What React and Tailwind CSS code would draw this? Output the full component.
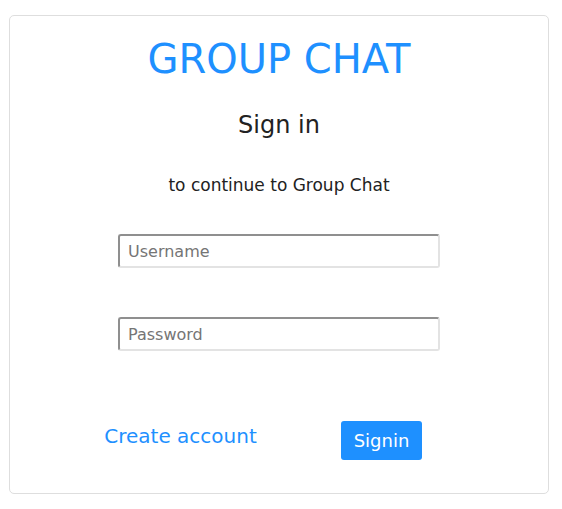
export default function App() {
  return (
    <div className="min-h-screen bg-white pt-[15px] pl-[9px] font-['DejaVu_Sans',Verdana,sans-serif]">
      <div className="w-[540px] h-[479px] border border-[#dedede] rounded-[5px] flex flex-col items-center">
        <h1 className="mt-[23px] text-[40px] leading-none text-[#1e90ff]">GROUP CHAT</h1>
        <h2 className="mt-[34px] text-[24px] leading-none text-[#222]">Sign in</h2>
        <p className="mt-[40px] text-[17px] leading-none text-[#222]">to continue to Group Chat</p>

        <input
          type="text"
          placeholder="Username"
          className="mt-[40px] w-[322px] h-[34px] px-[8px] text-[16px] border-2 border-t-[#8f8f8f] border-l-[#8f8f8f] border-b-[#e3e3e3] border-r-[#e3e3e3] rounded-[3px] placeholder:text-[#757575] outline-none"
        />
        <input
          type="password"
          placeholder="Password"
          className="mt-[49px] w-[322px] h-[34px] px-[8px] text-[16px] border-2 border-t-[#8f8f8f] border-l-[#8f8f8f] border-b-[#e3e3e3] border-r-[#e3e3e3] rounded-[3px] placeholder:text-[#757575] outline-none"
        />

        <div className="mt-[70px] w-full flex pl-[70px]">
          <div className="w-[201px] flex justify-center">
            <a href="#" className="mt-[5px] text-[20px] leading-none text-[#1e90ff]">Create account</a>
          </div>
          <div className="w-[201px] flex justify-center">
            <button className="w-[81px] h-[39px] bg-[#1e90ff] text-white text-[18px] rounded-[3px]">Signin</button>
          </div>
        </div>
      </div>
    </div>
  );
}
